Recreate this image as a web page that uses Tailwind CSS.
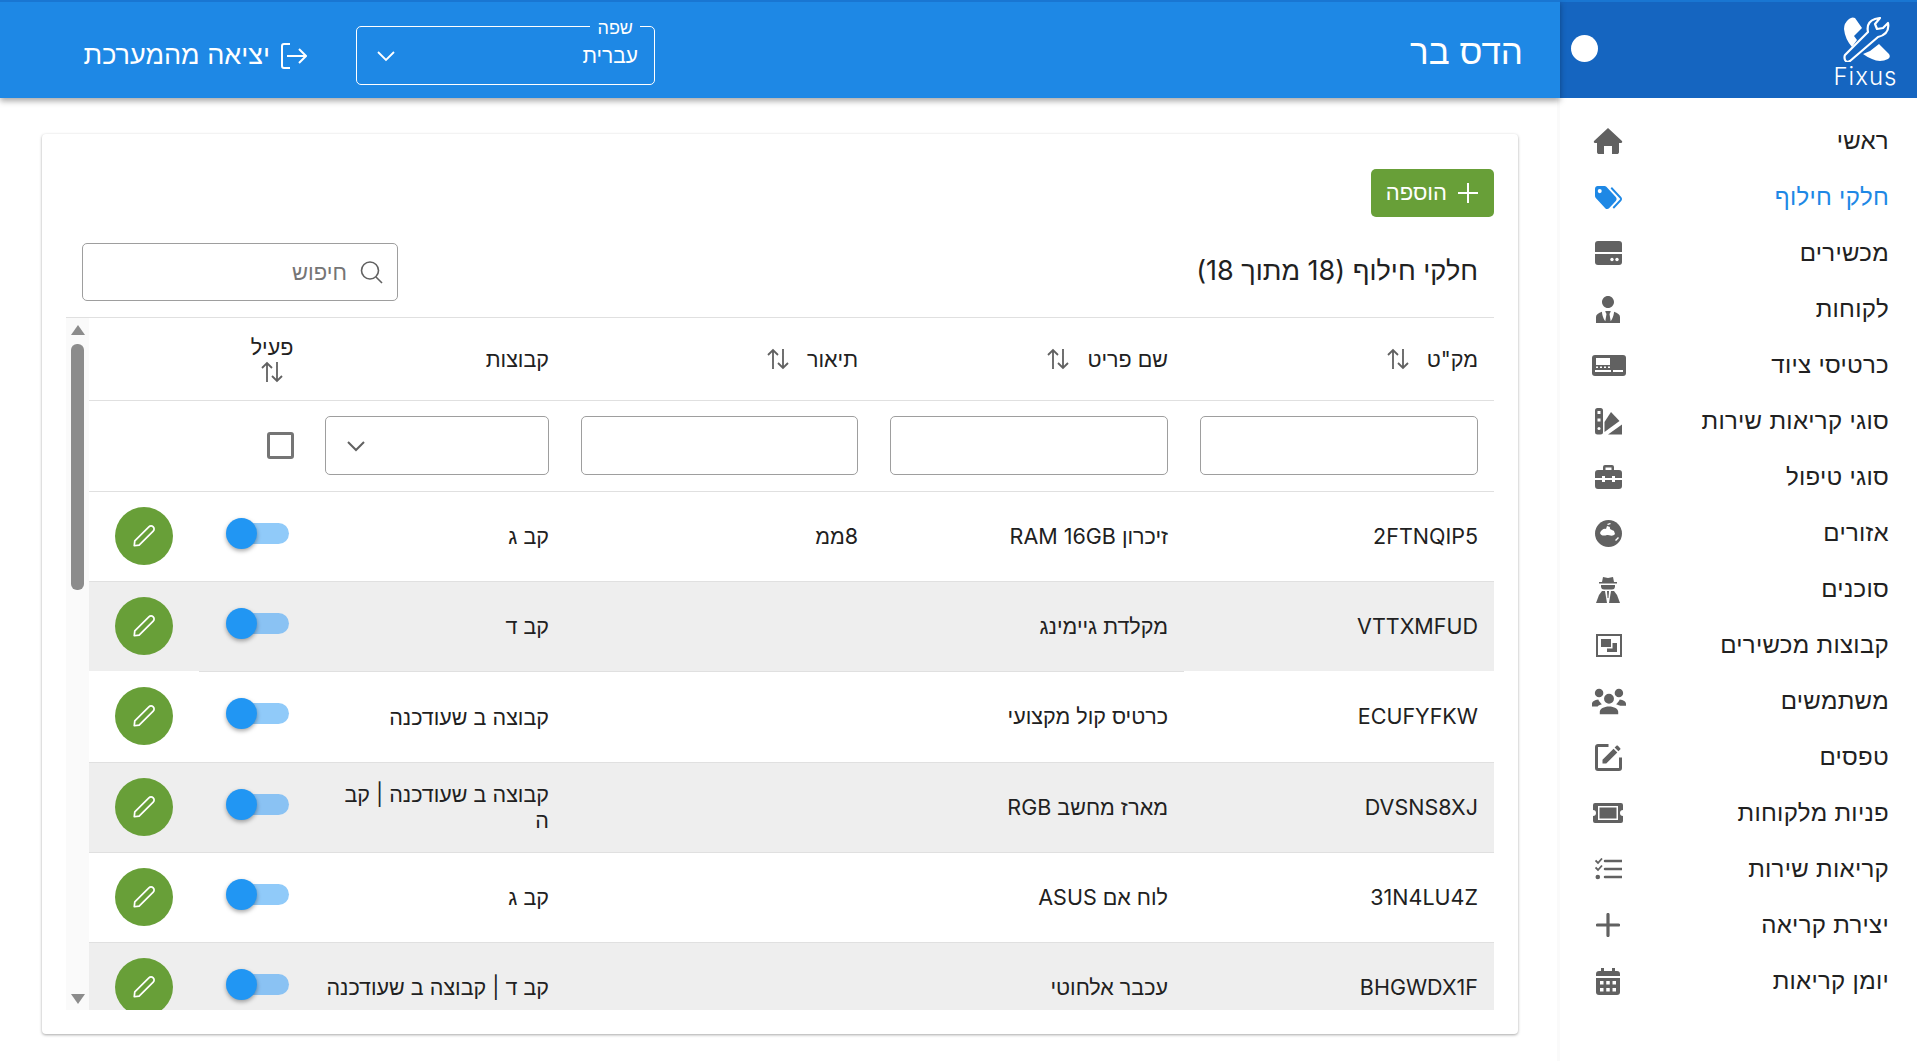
<!DOCTYPE html>
<html lang="he" dir="rtl">
<head>
  <meta charset="UTF-8" />
  <title>Fixus</title>
  <script src="https://cdn.jsdelivr.net/npm/@tailwindcss/browser@4"></script>
</head>
<body class="bg-white text-[#212121] font-['Inter','Liberation_Sans',sans-serif] h-[1061px] w-[1917px] overflow-hidden">
<div class="flex h-[1061px]">

  <!-- Sidebar -->
  <aside class="w-[357px] shrink-0 bg-white z-20 shadow-[-3px_0_0_#fafafa]">
    <div class="h-[98px] bg-[#1565c0] border-t-2 border-[#1976d2] flex items-start justify-between pr-[20px] pl-[11px]">
      <div class="w-[63px] flex flex-col items-center pt-[15px]">
        <svg viewBox="0 0 48 45" class="w-[48px] h-[45px]" fill="white">
          <path d="M7 2 Q10 -0.500 13 1 L20 11 L12 19 L15 23 L10 30 Q3 22 2 12 Q2 6 7 2 Z"/>
          <path d="M21 37 L28 34 L37 27 L47 37 Q49 40 46 42 Q38 46 30 42 Q25 40 21 37 Z"/>
          <path d="M3 38 L26 15 Q24 5 33 2 L38 1 L33 7 L35 12 L41 11 L46 6 Q48 17 36 20 L8 44 Q5 46 3 43 Q2 40 3 38 Z" fill="#1565c0" stroke="white" stroke-width="2.200" stroke-linejoin="round"/>
        </svg>
        <span class="text-[24px] leading-[22px] font-light tracking-[1px] text-white mt-[4px]" dir="ltr">Fixus</span>
      </div>
      <span class="w-[27px] h-[27px] rounded-full bg-white mt-[33px]"></span>
    </div>

    <nav class="pt-[15px] text-[24px] tracking-[0.3px]">
      <a class="h-[56px] flex items-center justify-between pr-[28px] pl-[33px]">
        <span>ראשי</span>
        <svg viewBox="0 0 30 28" class="w-[30px] h-[28px]" fill="#616161"><path d="M15 1 L29 14 C29.500 15 29 16 28 16 H26 V25 C26 26.500 25 27 24 27 H19 V19 H11 V27 H6 C5 27 4 26.500 4 25 V16 H2 C1 16 0.500 15 1 14 Z"/></svg>
      </a>
      <a class="h-[56px] flex items-center justify-between pr-[28px] pl-[35px] text-[#1e88e5]">
        <span>חלקי חילוף</span>
        <svg viewBox="2 4 20 16" class="w-[27px] h-[23px]" fill="#1e88e5" preserveAspectRatio="none"><path d="M5.5,9A1.5,1.5 0 0,0 7,7.5A1.5,1.5 0 0,0 5.5,6A1.5,1.5 0 0,0 4,7.500A1.5,1.5 0 0,0 5.5,9M17.41,11.58C17.77,11.94 18,12.44 18,13C18,13.55 17.78,14.05 17.41,14.41L12.41,19.41C12.05,19.77 11.55,20 11,20C10.45,20 9.95,19.78 9.58,19.41L2.59,12.42C2.22,12.05 2,11.55 2,11V6C2,4.89 2.89,4 4,4H9C9.55,4 10.05,4.22 10.41,4.58L17.41,11.58M13.54,5.71L14.54,4.71L21.41,11.58C21.78,11.94 22,12.45 22,13C22,13.55 21.78,14.05 21.42,14.41L16.04,19.79L15.04,18.79L20.75,13L13.54,5.71Z"/></svg>
      </a>
      <a class="h-[56px] flex items-center justify-between pr-[28px] pl-[35px]">
        <span>מכשירים</span>
        <svg viewBox="0 0 27 24" class="w-[27px] h-[24px]" fill="#616161"><path d="M3 0 H24 A3 3 0 0 1 27 3 V11 H0 V3 A3 3 0 0 1 3 0 Z"/><path d="M0 13 H27 V21 A3 3 0 0 1 24 24 H3 A3 3 0 0 1 0 21 Z"/><circle cx="17" cy="18.500" r="1.700" fill="white"/><circle cx="22" cy="18.500" r="1.700" fill="white"/></svg>
      </a>
      <a class="h-[56px] flex items-center justify-between pr-[28px] pl-[36px]">
        <span>לקוחות</span>
        <svg viewBox="4 3 16 18" class="w-[24px] h-[27px]" fill="#616161"><path d="M12 3C14.21 3 16 4.790 16 7S14.210 11 12 11 8 9.210 8 7 9.790 3 12 3M16 13.540C16 14.600 15.720 17.070 13.810 19.830L13 15L13.940 13.120C13.320 13.050 12.670 13 12 13S10.680 13.050 10.060 13.120L11 15L10.190 19.830C8.280 17.070 8 14.600 8 13.540C5.610 14.240 4 15.500 4 17V21H20V17C20 15.500 18.400 14.240 16 13.540Z"/></svg>
      </a>
      <a class="h-[56px] flex items-center justify-between pr-[28px] pl-[32px]">
        <span>כרטיסי ציוד</span>
        <svg viewBox="0 0 34 21" class="w-[34px] h-[21px]" fill="#616161"><rect width="34" height="21" rx="3"/><rect x="4" y="3" width="14" height="7" fill="white"/><g fill="white"><rect x="4" y="11.500" width="2" height="1.500"/><rect x="8" y="11.500" width="2" height="1.500"/><rect x="12" y="11.500" width="2" height="1.500"/><rect x="16" y="11.500" width="2" height="1.500"/><rect x="3" y="15" width="16" height="2"/><rect x="21" y="15" width="10" height="2"/></g></svg>
      </a>
      <a class="h-[56px] flex items-center justify-between pr-[28px] pl-[35px]">
        <span>סוגי קריאות שירות</span>
        <svg viewBox="0 0 27 27" class="w-[27px] h-[27px]" fill="#616161"><rect width="8" height="26.500" rx="2.500"/><rect x="2.500" y="3" width="3" height="3" fill="white"/><rect x="2.500" y="10.500" width="3" height="3" fill="white"/><circle cx="4" cy="20.500" r="1.500" fill="white"/><path d="M9.500 14 L16 4 L24.500 13 L9.500 24 Z"/><path d="M13 26.500 L27 16.500 V26.500 Z"/></svg>
      </a>
      <a class="h-[56px] flex items-center justify-between pr-[28px] pl-[35px]">
        <span>סוגי טיפול</span>
        <svg viewBox="0 0 27 24" class="w-[27px] h-[24px]" fill="#616161"><path d="M8 6 V2 A2 2 0 0 1 10 0 H17 A2 2 0 0 1 19 2 V6 H16.500 V2.500 H10.500 V6 Z"/><path d="M3 5 H24 A3 3 0 0 1 27 8 V13 H20 V11 H17 V13 H10 V11 H7 V13 H0 V8 A3 3 0 0 1 3 5 Z"/><path d="M0 15 H7 V17 H10 V15 H17 V17 H20 V15 H27 V21 A3 3 0 0 1 24 24 H3 A3 3 0 0 1 0 21 Z"/></svg>
      </a>
      <a class="h-[56px] flex items-center justify-between pr-[28px] pl-[35px]">
        <span>אזורים</span>
        <svg viewBox="0 0 27 27" class="w-[27px] h-[27px]"><circle cx="13.500" cy="13.500" r="13.500" fill="#616161"/><path d="M5 13 C6 10 9 8 11 9 L12 6 L15 7 C14 9 17 10 19 11 L20 14 C18 17 14 15 12 15 C9 16 6 16 5 13 Z" fill="white"/><path d="M20 20 L23 17 L24 18 L21 21 Z M12 4 L15 3 L16 4 L13 5 Z" fill="white"/></svg>
      </a>
      <a class="h-[56px] flex items-center justify-between pr-[28px] pl-[36px]">
        <span>סוכנים</span>
        <svg viewBox="0 0 24 27" class="w-[24px] h-[27px]" fill="#616161"><path d="M7 1 L12 2 L17 1 L18 6 H21 V7.500 H3 V6 H6 Z"/><path d="M5 9 H19 V11 A3 3 0 0 1 16 13.500 H8 A3 3 0 0 1 5 11 Z"/><path d="M6 15 H9 L11 27 H0 L3 19 Z"/><path d="M15 15 H18 L21 19 L24 27 H13 Z"/><path d="M11 15 H13 L12.500 22 H11.500 Z"/></svg>
      </a>
      <a class="h-[56px] flex items-center justify-between pr-[28px] pl-[36px]">
        <span>קבוצות מכשירים</span>
        <svg viewBox="0 0 26 23" class="w-[26px] h-[23px]" fill="#616161"><path fill-rule="evenodd" d="M0 0 H26 V23 H0 Z M2 2 V21 H24 V2 Z"/><path d="M5 5 H15 V13 H5 Z"/><path d="M16.500 9 H21 V18 H11 V14.500 H16.500 Z"/></svg>
      </a>
      <a class="h-[56px] flex items-center justify-between pr-[28px] pl-[32px]">
        <span>משתמשים</span>
        <svg viewBox="0 2 24 18" class="w-[34px] h-[27px]" fill="#616161"><path d="M12,5.500A3.500,3.500 0 0,1 15.500,9A3.500,3.500 0 0,1 12,12.500A3.500,3.500 0 0,1 8.500,9A3.500,3.500 0 0,1 12,5.500M5,2C6.660,2 8,3.340 8,5A3,3 0 0,1 5,8A3,3 0 0,1 2,5A3,3 0 0,1 5,2M19,2A3,3 0 0,1 22,5A3,3 0 0,1 19,8A3,3 0 0,1 16,5A3,3 0 0,1 19,2M5.500,18.250C5.500,16.180 8.410,14.500 12,14.500C15.590,14.500 18.500,16.180 18.500,18.250V20H5.500V18.250M0,14V12.500C0,11.110 1.890,9.940 4.450,9.600C5,11 6,12 7,13C5.500,13.500 4.500,14 4,14.500H0M24,14H20C19.500,14 18.500,13.500 17,13C18,12 19,11 19.550,9.600C22.110,9.940 24,11.110 24,12.500V14Z"/></svg>
      </a>
      <a class="h-[56px] flex items-center justify-between pr-[28px] pl-[35px]">
        <span>טפסים</span>
        <svg viewBox="3 3 18 18" class="w-[27px] h-[27px]" fill="#616161"><path d="M5,3C3.890,3 3,3.890 3,5V19A2,2 0 0,0 5,21H19A2,2 0 0,0 21,19V12H19V19H5V5H12V3H5M17.780,4C17.610,4 17.430,4.070 17.300,4.200L16.080,5.410L18.580,7.910L19.800,6.700C20.060,6.440 20.060,6 19.800,5.750L18.250,4.200C18.120,4.070 17.950,4 17.780,4M15.370,6.120L8,13.500V16H10.500L17.870,8.620L15.370,6.120Z"/></svg>
      </a>
      <a class="h-[56px] flex items-center justify-between pr-[28px] pl-[33px]">
        <span>פניות מלקוחות</span>
        <svg viewBox="0 0 30 20" class="w-[30px] h-[20px]" fill="#616161"><path fill-rule="evenodd" d="M2 0 H28 A2 2 0 0 1 30 2 V7 A3 3 0 0 0 30 13 V18 A2 2 0 0 1 28 20 H2 A2 2 0 0 1 0 18 V13 A3 3 0 0 0 0 7 V2 A2 2 0 0 1 2 0 Z M5 3 V17 H25 V3 Z"/><rect x="6.500" y="4.500" width="17" height="11"/></svg>
      </a>
      <a class="h-[56px] flex items-center justify-between pr-[28px] pl-[35px]">
        <span>קריאות שירות</span>
        <svg viewBox="0 0 27 22" class="w-[27px] h-[22px]" fill="none" stroke="#616161" stroke-width="2.500"><path d="M10 3 H27 M10 11 H27 M10 19 H27" stroke-linecap="round"/><path d="M0.500 2.500 L3 5 L7 0.500 M0.500 9.500 L3 12 L7 7.500" stroke-width="1.800"/><circle cx="2.800" cy="19" r="2.300" fill="#616161" stroke="none"/></svg>
      </a>
      <a class="h-[56px] flex items-center justify-between pr-[28px] pl-[36px]">
        <span>יצירת קריאה</span>
        <svg viewBox="0 0 24 24" class="w-[24px] h-[24px]" fill="none" stroke="#616161" stroke-width="3.200" stroke-linecap="round"><path d="M12 1.500 V22.500 M1.500 12 H22.500"/></svg>
      </a>
      <a class="h-[56px] flex items-center justify-between pr-[28px] pl-[36px]">
        <span>יומן קריאות</span>
        <svg viewBox="0 0 24 27" class="w-[24px] h-[27px]" fill="#616161"><path d="M5 0 H8 V3 H16 V0 H19 V3 H21 A3 3 0 0 1 24 6 V8 H0 V6 A3 3 0 0 1 3 3 H5 Z"/><path d="M0 10 H24 V24 A3 3 0 0 1 21 27 H3 A3 3 0 0 1 0 24 Z"/><g fill="white"><rect x="4" y="13" width="3.500" height="3.500"/><rect x="10.250" y="13" width="3.500" height="3.500"/><rect x="16.500" y="13" width="3.500" height="3.500"/><rect x="4" y="20" width="3.500" height="3.500"/><rect x="10.250" y="20" width="3.500" height="3.500"/><rect x="16.500" y="20" width="3.500" height="3.500"/></g></svg>
      </a>
    </nav>
  </aside>

  <!-- Main -->
  <div class="flex-1 min-w-0 flex flex-col">
    <header class="h-[98px] shrink-0 bg-[#1e88e5] border-t-2 border-[#1976d2] shadow-[0_3px_6px_rgba(0,0,0,0.35)] z-30 flex items-center pr-[37px] text-white">
      <h1 class="text-[35px] leading-none mt-[2px] font-normal w-[868px] shrink-0">הדס בר</h1>
      <div class="w-[299px] h-[59px] mt-[11px] border border-white rounded-[5px] pr-[16px] pl-[19px] relative flex items-center justify-between shrink-0">
        <span class="absolute -top-[7px] right-[14px] bg-[#1e88e5] px-[7px] text-[18px] leading-[16px]">שפה</span>
        <span class="text-[21px] leading-[24px] mt-[1px]">עברית</span>
        <svg viewBox="0 0 20 20" class="w-[20px] h-[20px]" fill="none" stroke="white" stroke-width="1.800"><path d="M2 6 L10 14 L18 6"/></svg>
      </div>
      <a class="flex items-center gap-[10px] mr-[49px] mt-[11px] text-[27px] whitespace-nowrap">
        <svg viewBox="0 0 27 26" class="w-[27px] h-[26px]" fill="none" stroke="white" stroke-width="2"><path d="M10 1 H4 A2 2 0 0 0 2 3 V23 A2 2 0 0 0 4 25 H10"/><path d="M7 13 H26 M19 6 L26 13 L19 20"/></svg>
        <span>יציאה מהמערכת</span>
      </a>
    </header>

    <main class="flex-1 min-h-0 pt-[36px] pr-[42px] pl-[42px]">
      <section class="h-[900px] rounded-[4px] bg-white shadow-[0_1px_3px_rgba(0,0,0,0.35)] pt-[35px] pr-[24px] pl-[24px] flex flex-col">
        <button class="self-start h-[48px] w-[123px] rounded-[5px] bg-[#689f38] text-white text-[22px] flex items-center gap-[10px] pr-[15px] pb-[2px] shrink-0">
          <svg viewBox="0 0 22 22" class="w-[22px] h-[22px] mt-[2px]" fill="none" stroke="white" stroke-width="2"><path d="M11 1 V21 M1 11 H21"/></svg>
          <span>הוספה</span>
        </button>

        <div class="flex items-start justify-between h-[74px] mt-[26px] pr-[16px] pl-[16px] shrink-0">
          <h2 class="text-[27px] font-normal leading-none mt-[14px]">חלקי חילוף (18 מתוך 18)</h2>
          <div class="w-[316px] h-[58px] border border-[#9e9e9e] rounded-[5px] flex items-center gap-[12px] pr-[14px]">
            <svg viewBox="0 0 24 24" class="w-[24px] h-[24px]" fill="none" stroke="#616161" stroke-width="1.600"><circle cx="11" cy="10.500" r="8.500"/><path d="M17 17 L23 23"/></svg>
            <span class="text-[22px] text-[#757575]">חיפוש</span>
          </div>
        </div>

        <div class="flex border-t border-[#e0e0e0] h-[693px] overflow-hidden" dir="ltr">
          <!-- vertical scrollbar -->
          <div class="w-[23px] shrink-0 bg-[#fafafa] flex flex-col items-center justify-between pt-[7px] pb-[6px]">
            <span class="w-0 h-0 border-x-[7px] border-x-transparent border-b-[10px] border-b-[#8c8c8c]"></span>
            <span class="w-[13px] h-[246px] bg-[#8c8c8c] rounded-[6px] mt-[9px] mb-auto"></span>
            <span class="w-0 h-0 border-x-[7px] border-x-transparent border-t-[10px] border-t-[#8c8c8c]"></span>
          </div>
          <div class="flex-1 min-w-0 overflow-hidden" dir="rtl">
            <table class="w-[1405px] table-fixed border-collapse text-[21.5px]">
              <colgroup><col class="w-[310px]"/><col class="w-[310px]"/><col class="w-[309px]"/><col class="w-[256px]"/><col class="w-[110px]"/><col class="w-[110px]"/></colgroup>
              <thead>
                <tr class="h-[82px] border-b border-[#e0e0e0] text-right">
                  <th class="font-normal pr-[16px]"><div class="flex items-center gap-[17px]"><span>מק"ט</span><svg viewBox="0 0 24 24" class="w-[24px] h-[24px]" fill="none" stroke="#616161" stroke-width="1.800"><path d="M7 22 V3 M2 8 L7 3 L12 8 M17 2 V21 M12 16 L17 21 L22 16"/></svg></div></th>
                  <th class="font-normal pr-[16px]"><div class="flex items-center gap-[17px]"><span>שם פריט</span><svg viewBox="0 0 24 24" class="w-[24px] h-[24px]" fill="none" stroke="#616161" stroke-width="1.800"><path d="M7 22 V3 M2 8 L7 3 L12 8 M17 2 V21 M12 16 L17 21 L22 16"/></svg></div></th>
                  <th class="font-normal pr-[16px]"><div class="flex items-center gap-[17px]"><span>תיאור</span><svg viewBox="0 0 24 24" class="w-[24px] h-[24px]" fill="none" stroke="#616161" stroke-width="1.800"><path d="M7 22 V3 M2 8 L7 3 L12 8 M17 2 V21 M12 16 L17 21 L22 16"/></svg></div></th>
                  <th class="font-normal pr-[16px]">קבוצות</th>
                  <th class="font-normal pr-[16px]"><div class="flex flex-col items-center w-[42px] leading-[26px]"><span>פעיל</span><svg viewBox="0 0 24 24" class="w-[24px] h-[24px]" fill="none" stroke="#616161" stroke-width="1.800"><path d="M7 22 V3 M2 8 L7 3 L12 8 M17 2 V21 M12 16 L17 21 L22 16"/></svg></div></th>
                  <th></th>
                </tr>
              </thead>
              <tbody>
                <tr class="h-[91px] border-b border-[#e0e0e0]">
                  <td class="px-[16px]"><div class="h-[59px] border border-[#9e9e9e] rounded-[5px]"></div></td>
                  <td class="px-[16px]"><div class="h-[59px] border border-[#9e9e9e] rounded-[5px]"></div></td>
                  <td class="px-[16px]"><div class="h-[59px] border border-[#9e9e9e] rounded-[5px]"></div></td>
                  <td class="px-[16px]"><div class="h-[59px] border border-[#9e9e9e] rounded-[5px] flex items-center pl-[20px] justify-end"><svg viewBox="0 0 20 20" class="w-[20px] h-[20px]" fill="none" stroke="#616161" stroke-width="2"><path d="M2 6 L10 14 L18 6"/></svg></div></td>
                  <td class="pr-[15px]"><div class="w-[27px] h-[27px] border-[3px] border-[#757575] rounded-[3px]"></div></td>
                  <td></td>
                </tr>
                <tr class="h-[90px] border-b border-[#e0e0e0]">
                  <td class="pr-[16px]">2FTNQIP5</td>
                  <td class="pr-[16px]">זיכרון RAM 16GB</td>
                  <td class="pr-[16px]">8ממ</td>
                  <td class="pr-[16px] leading-[26px]">קב ג</td>
                  <td class="pr-[20px]"><div class="relative w-[63px] h-[31px] -mt-[6px]"><div class="absolute left-[2px] right-0 top-[5px] h-[21px] rounded-full bg-[#90caf9]"></div><div class="absolute left-0 top-0 w-[31px] h-[31px] rounded-full bg-[#2196f3] shadow-[0_2px_4px_rgba(0,0,0,0.35)]"></div></div></td>
                  <td class="pr-[26px]"><div class="w-[58px] h-[58px] rounded-full bg-[#689f38] flex items-center justify-center"><svg viewBox="0 0 24 24" class="w-[26px] h-[26px]" fill="none" stroke="white" stroke-width="1.600" stroke-linejoin="round"><path d="M3 21 L3.500 16.500 L16.500 3.500 A2.500 2.500 0 0 1 20.500 7.500 L7.500 20.500 Z"/></svg></div></td>
                </tr>
                <tr class="h-[90px] bg-[#eeeeee]">
                  <td class="pr-[16px]">VTTXMFUD</td>
                  <td class="pr-[16px] border-b border-[#e0e0e0]">מקלדת גיימינג</td>
                  <td class="pr-[16px] border-b border-[#e0e0e0]"></td>
                  <td class="pr-[16px] leading-[26px] border-b border-[#e0e0e0]">קב ד</td>
                  <td class="pr-[20px] border-b border-[#e0e0e0]"><div class="relative w-[63px] h-[31px] -mt-[6px]"><div class="absolute left-[2px] right-0 top-[5px] h-[21px] rounded-full bg-[#8ac2f3]"></div><div class="absolute left-0 top-0 w-[31px] h-[31px] rounded-full bg-[#2196f3] shadow-[0_2px_4px_rgba(0,0,0,0.35)]"></div></div></td>
                  <td class="pr-[26px]"><div class="w-[58px] h-[58px] rounded-full bg-[#689f38] flex items-center justify-center"><svg viewBox="0 0 24 24" class="w-[26px] h-[26px]" fill="none" stroke="white" stroke-width="1.600" stroke-linejoin="round"><path d="M3 21 L3.500 16.500 L16.500 3.500 A2.500 2.500 0 0 1 20.500 7.500 L7.500 20.500 Z"/></svg></div></td>
                </tr>
                <tr class="h-[91px] border-b border-[#e0e0e0]">
                  <td class="pr-[16px]">ECUFYFKW</td>
                  <td class="pr-[16px]">כרטיס קול מקצועי</td>
                  <td class="pr-[16px]"></td>
                  <td class="pr-[16px] leading-[26px]">קבוצה ב שעודכנה</td>
                  <td class="pr-[20px]"><div class="relative w-[63px] h-[31px] -mt-[6px]"><div class="absolute left-[2px] right-0 top-[5px] h-[21px] rounded-full bg-[#90caf9]"></div><div class="absolute left-0 top-0 w-[31px] h-[31px] rounded-full bg-[#2196f3] shadow-[0_2px_4px_rgba(0,0,0,0.35)]"></div></div></td>
                  <td class="pr-[26px]"><div class="w-[58px] h-[58px] rounded-full bg-[#689f38] flex items-center justify-center"><svg viewBox="0 0 24 24" class="w-[26px] h-[26px]" fill="none" stroke="white" stroke-width="1.600" stroke-linejoin="round"><path d="M3 21 L3.500 16.500 L16.500 3.500 A2.500 2.500 0 0 1 20.500 7.500 L7.500 20.500 Z"/></svg></div></td>
                </tr>
                <tr class="h-[90px] border-b border-[#e0e0e0] bg-[#eeeeee]">
                  <td class="pr-[16px]">DVSNS8XJ</td>
                  <td class="pr-[16px]">מארז מחשב RGB</td>
                  <td class="pr-[16px]"></td>
                  <td class="pr-[16px] pl-[16px] leading-[26px]">קבוצה ב שעודכנה | קב ה</td>
                  <td class="pr-[20px]"><div class="relative w-[63px] h-[31px] -mt-[6px]"><div class="absolute left-[2px] right-0 top-[5px] h-[21px] rounded-full bg-[#8ac2f3]"></div><div class="absolute left-0 top-0 w-[31px] h-[31px] rounded-full bg-[#2196f3] shadow-[0_2px_4px_rgba(0,0,0,0.35)]"></div></div></td>
                  <td class="pr-[26px]"><div class="w-[58px] h-[58px] rounded-full bg-[#689f38] flex items-center justify-center"><svg viewBox="0 0 24 24" class="w-[26px] h-[26px]" fill="none" stroke="white" stroke-width="1.600" stroke-linejoin="round"><path d="M3 21 L3.500 16.500 L16.500 3.500 A2.500 2.500 0 0 1 20.500 7.500 L7.500 20.500 Z"/></svg></div></td>
                </tr>
                <tr class="h-[90px] border-b border-[#e0e0e0]">
                  <td class="pr-[16px]">31N4LU4Z</td>
                  <td class="pr-[16px]">לוח אם ASUS</td>
                  <td class="pr-[16px]"></td>
                  <td class="pr-[16px] leading-[26px]">קב ג</td>
                  <td class="pr-[20px]"><div class="relative w-[63px] h-[31px] -mt-[6px]"><div class="absolute left-[2px] right-0 top-[5px] h-[21px] rounded-full bg-[#90caf9]"></div><div class="absolute left-0 top-0 w-[31px] h-[31px] rounded-full bg-[#2196f3] shadow-[0_2px_4px_rgba(0,0,0,0.35)]"></div></div></td>
                  <td class="pr-[26px]"><div class="w-[58px] h-[58px] rounded-full bg-[#689f38] flex items-center justify-center"><svg viewBox="0 0 24 24" class="w-[26px] h-[26px]" fill="none" stroke="white" stroke-width="1.600" stroke-linejoin="round"><path d="M3 21 L3.500 16.500 L16.500 3.500 A2.500 2.500 0 0 1 20.500 7.500 L7.500 20.500 Z"/></svg></div></td>
                </tr>
                <tr class="h-[90px] bg-[#eeeeee]">
                  <td class="pr-[16px]">BHGWDX1F</td>
                  <td class="pr-[16px]">עכבר אלחוטי</td>
                  <td class="pr-[16px]"></td>
                  <td class="pr-[16px] leading-[26px]">קב ד | קבוצה ב שעודכנה</td>
                  <td class="pr-[20px]"><div class="relative w-[63px] h-[31px] -mt-[6px]"><div class="absolute left-[2px] right-0 top-[5px] h-[21px] rounded-full bg-[#8ac2f3]"></div><div class="absolute left-0 top-0 w-[31px] h-[31px] rounded-full bg-[#2196f3] shadow-[0_2px_4px_rgba(0,0,0,0.35)]"></div></div></td>
                  <td class="pr-[26px]"><div class="w-[58px] h-[58px] rounded-full bg-[#689f38] flex items-center justify-center"><svg viewBox="0 0 24 24" class="w-[26px] h-[26px]" fill="none" stroke="white" stroke-width="1.600" stroke-linejoin="round"><path d="M3 21 L3.500 16.500 L16.500 3.500 A2.500 2.500 0 0 1 20.500 7.500 L7.500 20.500 Z"/></svg></div></td>
                </tr>
              </tbody>
            </table>
          </div>
        </div>
      </section>
    </main>
  </div>
</div>
</body>
</html>
